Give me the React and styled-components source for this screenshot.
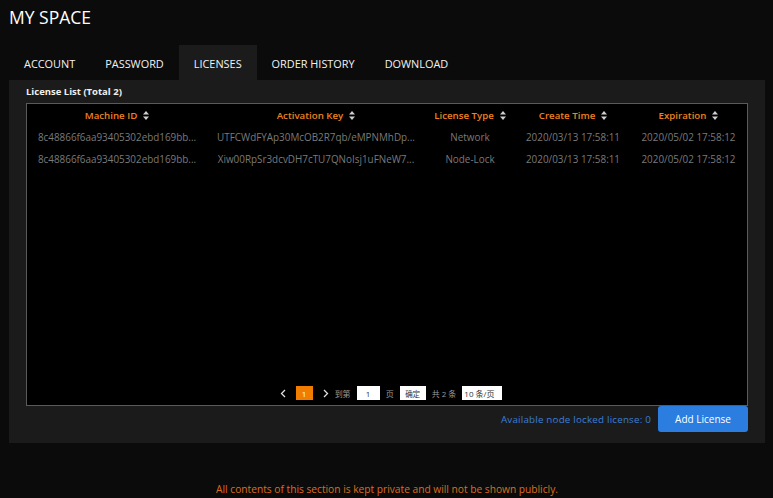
import styled, { createGlobalStyle } from 'styled-components'

const GlobalStyle = createGlobalStyle`
  html, body {
    margin: 0;
    padding: 0;
    background: #0b0b0b;
    font-family: "Open Sans", "Noto Sans CJK SC", sans-serif;
  }
`;

const columns = [
  { key: 'machine', title: 'Machine ID', width: 180 },
  { key: 'key', title: 'Activation Key', width: 218 },
  { key: 'type', title: 'License Type', width: 90 },
  { key: 'created', title: 'Create Time', width: 116 },
  { key: 'expires', title: 'Expiration', width: 115 },
];

const rows = [
  {
    machine: '8c48866f6aa93405302ebd169bb...',
    key: 'UTFCWdFYAp30McOB2R7qb/eMPNMhDp...',
    type: 'Network',
    created: '2020/03/13 17:58:11',
    expires: '2020/05/02 17:58:12',
  },
  {
    machine: '8c48866f6aa93405302ebd169bb...',
    key: 'Xiw00RpSr3dcvDH7cTU7QNoIsj1uFNeW7...',
    type: 'Node-Lock',
    created: '2020/03/13 17:58:11',
    expires: '2020/05/02 17:58:12',
  },
];

const tabs = ['ACCOUNT', 'PASSWORD', 'LICENSES', 'ORDER HISTORY', 'DOWNLOAD'];

function SortIcon() {
  return (
    <svg width="6" height="9" viewBox="0 0 6 9">
      <path d="M3 0 L6 3.5 L0 3.5 Z" fill="#cfcfcf" />
      <path d="M3 9 L6 5.5 L0 5.5 Z" fill="#cfcfcf" />
    </svg>
  );
}

function Chevron({ dir }) {
  return (
    <svg width="6" height="9" viewBox="0 0 6 9">
      <path
        d={dir === 'left' ? 'M5 1 L1.5 4.5 L5 8' : 'M1 1 L4.5 4.5 L1 8'}
        stroke="#e0e0e0"
        strokeWidth="1.3"
        fill="none"
      />
    </svg>
  );
}

export default function App() {
  return (
    <Page>
      <GlobalStyle />
      <Title>MY SPACE</Title>
      <Tabs>
        {tabs.map((t) => (
          <Tab key={t} active={t === 'LICENSES'}>{t}</Tab>
        ))}
      </Tabs>
      <Panel>
        <ListTitle>License List (Total 2)</ListTitle>
        <TableBox>
          <HeadRow>
            {columns.map((c) => (
              <HeadCell key={c.key} w={c.width}>
                {c.title}
                <SortIcon />
              </HeadCell>
            ))}
          </HeadRow>
          {rows.map((r, i) => (
            <Row key={i}>
              {columns.map((c) => (
                <Cell key={c.key} w={c.width}>{r[c.key]}</Cell>
              ))}
            </Row>
          ))}
          <Pager>
            <Chevron dir="left" />
            <PageNum>1</PageNum>
            <Chevron dir="right" />
            <PagerText>到第</PagerText>
            <PageInput>1</PageInput>
            <PagerText>页</PagerText>
            <GoButton>确定</GoButton>
            <PagerText>共 2 条</PagerText>
            <SizeSelect>10 条/页</SizeSelect>
          </Pager>
        </TableBox>
        <Footer>
          <Available>Available node locked license: 0</Available>
          <AddButton>Add License</AddButton>
        </Footer>
      </Panel>
      <Notice>All contents of this section is kept private and will not be shown publicly.</Notice>
    </Page>
  );
}

const Page = styled.div`
  width: 773px;
  height: 498px;
  background: #0b0b0b;
  padding: 0 8px 0 9px;
  box-sizing: border-box;
  overflow: hidden;
`;

const Title = styled.h1`
  margin: 0;
  padding-top: 5px;
  height: 45px;
  box-sizing: border-box;
  font-size: 17.5px;
  font-weight: 400;
  color: #ffffff;
`;

const Tabs = styled.div`
  display: flex;
  height: 35px;
`;

const Tab = styled.div`
  display: flex;
  align-items: center;
  padding: 2px 15px 0;
  font-size: 10.9px;
  font-weight: 500;
  color: #f2f2f2;
  background: ${(p) => (p.active ? '#1b1b1b' : 'transparent')};
`;

const Panel = styled.div`
  background: #1b1b1b;
  height: 363px;
  padding: 5px 17px 0;
  box-sizing: border-box;
`;

const ListTitle = styled.div`
  font-size: 9.5px;
  font-weight: 700;
  color: #f0f0f0;
  height: 18px;
`;

const TableBox = styled.div`
  height: 303px;
  border: 1px solid #5a5a5a;
  background: #000;
  display: flex;
  flex-direction: column;
  box-sizing: border-box;
`;

const HeadRow = styled.div`
  display: flex;
  height: 18px;
  align-items: flex-end;
`;

const HeadCell = styled.div`
  width: ${(p) => p.w}px;
  display: flex;
  align-items: center;
  justify-content: center;
  gap: 6px;
  font-size: 9.7px;
  font-weight: 600;
  color: #ee821f;
`;

const Row = styled.div`
  display: flex;
  height: 22px;
  align-items: flex-end;
`;

const Cell = styled.div`
  width: ${(p) => p.w}px;
  text-align: center;
  font-size: 9.9px;
  color: #7a7a7a;
  white-space: nowrap;
`;

const Pager = styled.div`
  margin-top: auto;
  margin-bottom: 4px;
  display: flex;
  align-items: center;
  justify-content: center;
  gap: 6px;
  padding-left: 8px;
  height: 16px;
`;

const PageNum = styled.div`
  width: 17px;
  height: 14px;
  margin: 0 4px;
  background: #f07c00;
  color: #fff;
  font-size: 8px;
  display: flex;
  align-items: center;
  justify-content: center;
`;

const PagerText = styled.span`
  font-size: 8px;
  color: #9a9a9a;
`;

const PageInput = styled.div`
  width: 23px;
  height: 14px;
  background: #fff;
  color: #333;
  font-size: 8px;
  display: flex;
  align-items: center;
  justify-content: center;
`;

const GoButton = styled.div`
  width: 26px;
  height: 14px;
  background: #fff;
  color: #333;
  font-size: 7.5px;
  display: flex;
  align-items: center;
  justify-content: center;
`;

const SizeSelect = styled.div`
  width: 38px;
  height: 14px;
  background: #fff;
  color: #333;
  font-size: 8px;
  padding-left: 2px;
  display: flex;
  align-items: center;
`;

const Footer = styled.div`
  display: flex;
  justify-content: flex-end;
  align-items: center;
  gap: 7px;
  height: 26px;
`;

const Available = styled.span`
  font-size: 9.8px;
  color: #3b7fd6;
  letter-spacing: 0.2px;
`;

const AddButton = styled.div`
  width: 90px;
  height: 26px;
  border-radius: 3px;
  background: #2b7de0;
  color: #fff;
  font-size: 10px;
  font-weight: 500;
  display: flex;
  align-items: center;
  justify-content: center;
`;

const Notice = styled.div`
  margin-top: 39px;
  text-align: center;
  font-size: 10.2px;
  color: #dd6e1d;
`;
